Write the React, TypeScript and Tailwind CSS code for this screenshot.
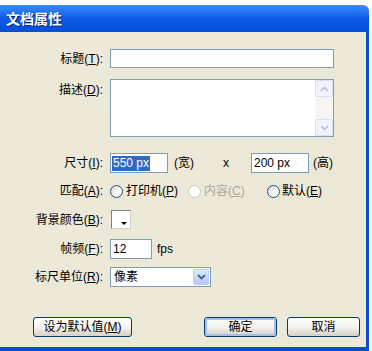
import React from "react";

const U = ({ c }: { c: string }) => (
  <span className="underline underline-offset-[1px]">{c}</span>
);

function Label({ text, k, top }: { text: string; k: string; top?: boolean }) {
  return (
    <div
      className={
        "w-[103px] shrink-0 text-right text-[12px] leading-[14px] text-black " +
        (top ? "pt-[4px]" : "")
      }
    >
      {text}(<U c={k} />):
    </div>
  );
}

function Radio({ disabled }: { disabled?: boolean }) {
  return (
    <span
      className={
        "inline-block w-[13px] h-[13px] rounded-full border shrink-0 " +
        (disabled
          ? "border-[#CAC8BB] bg-white"
          : "border-[#1C5180] bg-gradient-to-br from-[#D8D8D2] via-[#F4F4F0] to-white")
      }
    />
  );
}

function Chevron({ up, color }: { up?: boolean; color: string }) {
  return (
    <svg width="9" height="6" viewBox="0 0 9 6">
      <path
        d={up ? "M1 5 L4.5 1.5 L8 5" : "M1 1 L4.5 4.5 L8 1"}
        fill="none"
        stroke={color}
        strokeWidth="1.8"
      />
    </svg>
  );
}

function XPButton({
  children,
  w,
  def,
}: {
  children: React.ReactNode;
  w: string;
  def?: boolean;
}) {
  return (
    <div
      className={
        "h-[20px] rounded-[3px] border border-[#003C74] bg-gradient-to-b from-white via-[#F4F3EE] to-[#D6D0C5] flex items-center justify-center text-[12px] leading-[14px] text-black " +
        w
      }
    >
      <div
        className={
          "w-full h-full rounded-[2px] flex items-center justify-center " +
          (def ? "border-2 border-[#A6C0EC]" : "")
        }
      >
        {children}
      </div>
    </div>
  );
}

export default function App() {
  return (
    <div className="w-[372px] h-[351px] bg-white font-['Liberation_Sans','Noto_Sans_CJK_SC',sans-serif] overflow-hidden">
      <div className="pt-[5px] w-[369px]">
        {/* Title bar */}
        <div className="h-[27px] rounded-tr-[6px] bg-gradient-to-b from-[#3C8CF8] via-[#0A5AE6] to-[#0650D8] flex items-center pl-[6px]">
          <span className="text-white font-bold text-[14px] leading-[16px] [text-shadow:1px_1px_0_#0A1E70] tracking-[0px]">
            文档属性
          </span>
        </div>
        {/* Body */}
        <div className="h-[319px] bg-[#ECE9D8] border-r-[3px] border-b-[4px] border-[#0A4BD8] flex flex-col">
          {/* 标题 */}
          <div className="flex items-center mt-[17px]">
            <Label text="标题" k="T" />
            <div className="ml-[7px] w-[224px] h-[19px] border border-[#7F9DB9] bg-white" />
          </div>
          {/* 描述 */}
          <div className="flex items-start mt-[11px]">
            <Label text="描述" k="D" top />
            <div className="ml-[7px] w-[224px] h-[58px] border border-[#7F9DB9] bg-white flex justify-end">
              <div className="w-[18px] h-full bg-[#F7F6F2] flex flex-col justify-between">
                <div className="w-[18px] h-[17px] rounded-[2px] border border-[#D6DEF2] bg-[#F1F4FB] flex items-center justify-center">
                  <Chevron up color="#BFC7D6" />
                </div>
                <div className="w-[18px] h-[17px] rounded-[2px] border border-[#D6DEF2] bg-[#F1F4FB] flex items-center justify-center">
                  <Chevron color="#BFC7D6" />
                </div>
              </div>
            </div>
          </div>
          {/* 尺寸 */}
          <div className="flex items-center mt-[16px] text-[12px] leading-[14px]">
            <Label text="尺寸" k="I" />
            <div className="ml-[7px] w-[58px] h-[20px] border border-[#7F9DB9] bg-white flex items-center pl-[1px]">
              <span className="bg-[#316AC5] text-white px-[1px] h-[15px] flex items-center text-[12px]">
                550 px
              </span>
            </div>
            <span className="w-[55px] pl-[6px]">(宽)</span>
            <span className="w-[28px]">x</span>
            <div className="w-[58px] h-[20px] border border-[#7F9DB9] bg-white flex items-center pl-[2px]">
              200 px
            </div>
            <span className="pl-[4px]">(高)</span>
          </div>
          {/* 匹配 */}
          <div className="flex items-center mt-[8px] h-[20px] text-[12px] leading-[14px]">
            <Label text="匹配" k="A" />
            <div className="ml-[7px] w-[78px] flex items-center gap-[3px]">
              <Radio />
              <span>
                打印机(<U c="P" />)
              </span>
            </div>
            <div className="w-[79px] flex items-center gap-[3px] text-[#ACA899]">
              <Radio disabled />
              <span>
                内容(<U c="C" />)
              </span>
            </div>
            <div className="flex items-center gap-[2px]">
              <Radio />
              <span>
                默认(<U c="E" />)
              </span>
            </div>
          </div>
          {/* 背景颜色 */}
          <div className="flex items-center mt-[9px]">
            <Label text="背景颜色" k="B" />
            <div className="ml-[8px] w-[20px] h-[19px] bg-white border-l border-t border-[#808080] border-r border-r-[#D4D0C8] border-b border-b-[#D4D0C8] relative">
              <div className="absolute right-[3px] bottom-[3px] w-0 h-0 border-l-[3px] border-r-[3px] border-t-[3px] border-l-transparent border-r-transparent border-t-black" />
            </div>
          </div>
          {/* 帧频 */}
          <div className="flex items-center mt-[10px] text-[12px] leading-[14px]">
            <Label text="帧频" k="F" />
            <div className="ml-[7px] w-[42px] h-[20px] border border-[#7F9DB9] bg-white flex items-center pl-[2px]">
              12
            </div>
            <span className="pl-[5px]">fps</span>
          </div>
          {/* 标尺单位 */}
          <div className="flex items-center mt-[8px] text-[12px] leading-[14px]">
            <Label text="标尺单位" k="R" />
            <div className="ml-[7px] w-[101px] h-[20px] border border-[#7F9DB9] bg-white flex items-center justify-between pl-[3px] pr-[1px]">
              <span>像素</span>
              <div className="w-[16px] h-[16px] rounded-[2px] border border-[#B9CDF6] bg-gradient-to-b from-[#DCE7FD] to-[#B4C9F5] flex items-center justify-center">
                <Chevron color="#4D6185" />
              </div>
            </div>
          </div>
          {/* Buttons */}
          <div className="flex items-center mt-[30px]">
            <div className="ml-[33px]">
              <XPButton w="w-[99px]">
                <span>
                  设为默认值(<U c="M" />)
                </span>
              </XPButton>
            </div>
            <div className="ml-[72px]">
              <XPButton w="w-[73px]" def>
                确定
              </XPButton>
            </div>
            <div className="ml-[10px]">
              <XPButton w="w-[73px]">取消</XPButton>
            </div>
          </div>
        </div>
      </div>
    </div>
  );
}
